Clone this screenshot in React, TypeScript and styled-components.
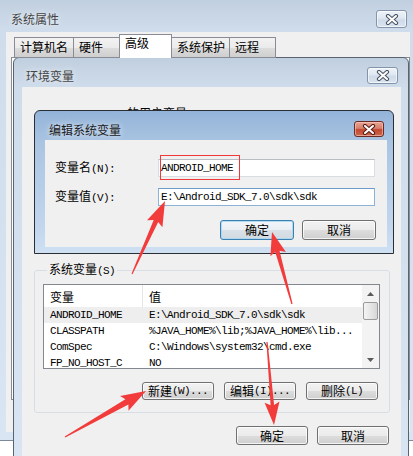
import React from "react";
import styled, { createGlobalStyle, css } from "styled-components";

const CJK = `"Noto Sans CJK SC", "Liberation Sans", sans-serif`;
const MONO = `"Liberation Mono", "Noto Sans CJK SC", monospace`;

const GlobalStyle = createGlobalStyle`
  html, body { margin: 0; padding: 0; background: #ffffff; }
  body { font-family: ${CJK}; font-size: 12px; color: #000; }
  * { box-sizing: border-box; }
`;

const Screen = styled.div`
  position: relative;
  width: 413px;
  height: 456px;
  overflow: hidden;
  background: #ffffff;
`;

const Mono = styled.span`
  font-family: ${MONO};
  font-size: 11px;
  letter-spacing: -0.6px;
`;

/* ---------- window chrome ---------- */

const Win = styled.div<{ $active?: boolean }>`
  position: absolute;
  display: flex;
  flex-direction: column;
  border: 1px solid ${(p) => (p.$active ? "#2a2f36" : "#5a6470")};
  border-radius: 6px 6px 0 0;
  background: ${(p) =>
    p.$active
      ? "linear-gradient(180deg, #93b3d8 0px, #a9c4e2 30px, #c3d7ee 120px, #cfe0f2 100%)"
      : "linear-gradient(180deg, #c0cfdf 0px, #cfdceb 30px, #d9e5f2 100%)"};
`;

const SysWin = styled(Win)`
  left: -1px;
  top: -1px;
  width: 420px;
  height: 442px;
  border-radius: 0;
  border-color: #7d8a99;
`;

const EnvWin = styled(Win)`
  left: 13px;
  top: 57px;
  width: 396px;
  height: 420px;
`;

const EditWin = styled(Win)`
  left: 34px;
  top: 110px;
  width: 360px;
  height: 144px;
`;

const TitleBar = styled.div<{ $h: number; $pl: number; $pr: number; $pt: number }>`
  height: ${(p) => p.$h}px;
  flex: none;
  display: flex;
  align-items: flex-start;
  justify-content: space-between;
  padding: ${(p) => `${p.$pt}px ${p.$pr}px 0 ${p.$pl}px`};
`;

const Title = styled.span<{ $active?: boolean }>`
  font-size: 12px;
  line-height: 16px;
  margin-top: 1px;
  color: ${(p) => (p.$active ? "#1b1b1b" : "#454545")};
  text-shadow: 0 0 6px rgba(255, 255, 255, 0.9);
`;

const CloseBtn = styled.div<{ $red?: boolean; $w: number; $h: number }>`
  width: ${(p) => p.$w}px;
  height: ${(p) => p.$h}px;
  border-radius: 3px;
  display: flex;
  align-items: center;
  justify-content: center;
  ${(p) =>
    p.$red
      ? css`
          border: 1px solid #6b2a22;
          background: linear-gradient(180deg, #e7a595 0%, #d67f6b 45%, #c2472f 55%, #cc6a4f 100%);
          box-shadow: inset 0 0 0 1px rgba(255, 210, 200, 0.55);
        `
      : css`
          border: 1px solid #8494aa;
          background: linear-gradient(180deg, #eef3f9 0%, #dfe8f2 45%, #cfdbe9 55%, #d9e4f0 100%);
          box-shadow: inset 0 0 0 1px rgba(255, 255, 255, 0.6);
        `}
`;

const XGlyph = ({ red }: { red?: boolean }) => (
  <svg width="14" height="11" viewBox="0 0 14 11">
    <path d="M3 2 L11 9 M11 2 L3 9" stroke={red ? "#5a1e16" : "#4b5563"} strokeWidth="4.2" strokeLinecap="round" />
    <path d="M3 2 L11 9 M11 2 L3 9" stroke="#ffffff" strokeWidth="2.1" strokeLinecap="round" />
  </svg>
);

/* ---------- 系统属性 body ---------- */

const SysBody = styled.div`
  flex: 1;
  margin: 0 8px 8px 6px;
  background: #f0f0f0;
  display: flex;
  flex-direction: column;
`;

const TabRow = styled.div`
  height: 26px;
  flex: none;
  display: flex;
  align-items: flex-end;
  padding-left: 8px;
`;

const Tab = styled.div<{ $w: number; $sel?: boolean }>`
  width: ${(p) => p.$w}px;
  height: ${(p) => (p.$sel ? 24 : 21)}px;
  border: 1px solid #898c95;
  border-bottom: ${(p) => (p.$sel ? "none" : "1px solid #898c95")};
  margin-right: -1px;
  background: ${(p) => (p.$sel ? "#ffffff" : "linear-gradient(180deg, #f2f2f2 0%, #ebebeb 50%, #dddddd 51%, #cfcfcf 100%)")};
  font-size: 12px;
  line-height: ${(p) => (p.$sel ? 16 : 18)}px;
  padding-left: 5px;
  position: relative;
  z-index: ${(p) => (p.$sel ? 2 : 1)};
`;

const TabPage = styled.div`
  margin: -1px 0 0 5px;
  height: 343px;
  background: #ffffff;
  border: 1px solid #898c95;
`;

/* ---------- 环境变量 content ---------- */

const EnvContent = styled.div`
  flex: 1;
  margin: 0 7px 0 8px;
  background: #f0f0f0;
  display: flex;
  flex-direction: column;
`;

const UserSection = styled.div`
  height: 175px;
  flex: none;
  padding: 19px 0 0 21px;
  line-height: 14px;
`;

const Group = styled.fieldset`
  margin: 0 11px 0 12px;
  padding: 6px 9px 12px 8px;
  border: 1px solid #d5dfe5;
  border-radius: 3px;
  min-width: 0;
`;

const Legend = styled.legend`
  padding: 0 2px;
  margin-left: 4px;
  font-size: 12px;
  line-height: 14px;
`;

const List = styled.div`
  height: 85px;
  border: 1px solid #828790;
  background: #ffffff;
  display: flex;
  overflow: hidden;
`;

const ListMain = styled.div`
  flex: 1;
  display: flex;
  flex-direction: column;
  min-width: 0;
`;

const ListRow = styled.div<{ $sel?: boolean }>`
  height: 16px;
  flex: none;
  display: grid;
  grid-template-columns: 99px 1fr;
  align-items: center;
  background: ${(p) => (p.$sel ? "#eeeeee" : "transparent")};
  white-space: nowrap;
`;

const HeaderRow = styled(ListRow)`
  height: 22px;
  background: #ffffff;
  align-items: stretch;
`;

const HeaderCell = styled.div<{ $sep?: boolean }>`
  display: flex;
  align-items: center;
  padding-left: 6px;
  font-size: 12px;
  border-right: ${(p) => (p.$sep ? "1px solid #e5e5e5" : "none")};
`;

const Cell = styled.div`
  padding-left: 6px;
  font-family: ${MONO};
  font-size: 11px;
  letter-spacing: -0.6px;
  line-height: 16px;
  overflow: hidden;
`;

const ScrollBar = styled.div`
  width: 17px;
  flex: none;
  display: flex;
  flex-direction: column;
  background: #f3f3f3;
`;

const ScrollArrow = styled.div`
  height: 17px;
  display: flex;
  align-items: center;
  justify-content: center;
`;

const Thumb = styled.div`
  height: 18px;
  margin: 0 1px;
  border: 1px solid #9b9b9b;
  border-radius: 2px;
  background: linear-gradient(90deg, #f4f4f4 0%, #e6e6e6 50%, #d6d6d6 100%);
`;

const ScrollSpacer = styled.div`
  flex: 1;
`;

const ButtonRow = styled.div<{ $mt: number; $pr: number; $gap: number }>`
  display: flex;
  justify-content: flex-end;
  gap: ${(p) => p.$gap}px;
  margin-top: ${(p) => p.$mt}px;
  padding-right: ${(p) => p.$pr}px;
`;

const Btn = styled.div<{ $def?: boolean; $w: number; $h: number }>`
  width: ${(p) => p.$w}px;
  height: ${(p) => p.$h}px;
  border: 1px solid ${(p) => (p.$def ? "#3c7fb1" : "#707070")};
  border-radius: 3px;
  background: ${(p) =>
    p.$def
      ? "linear-gradient(180deg, #f3f7fa 0%, #e9eef3 50%, #dae1e8 51%, #d2dae2 100%)"
      : "linear-gradient(180deg, #f2f2f2 0%, #ebebeb 50%, #dddddd 51%, #cfcfcf 100%)"};
  box-shadow: inset 0 0 0 1px ${(p) => (p.$def ? "rgba(170, 215, 240, 0.9)" : "rgba(255, 255, 255, 0.75)")};
  display: flex;
  align-items: center;
  justify-content: center;
  font-size: 12px;
  line-height: 14px;
  white-space: nowrap;
`;

/* ---------- 编辑系统变量 content ---------- */

const EditContent = styled.div`
  flex: 1;
  margin: 0 6px 6px 10px;
  background: #f0f0f0;
  padding: 18px 0 0 0;
  display: flex;
  flex-direction: column;
`;

const FormGrid = styled.div`
  display: grid;
  grid-template-columns: 103px 217px;
  row-gap: 9px;
  padding-left: 10px;
  align-items: center;
`;

const FieldLabel = styled.div`
  font-size: 12px;
  line-height: 18px;
  white-space: nowrap;
`;

const Field = styled.div<{ $focus?: boolean }>`
  height: 18px;
  background: #ffffff;
  border: 1px solid ${(p) => (p.$focus ? "#8db2d8" : "#d9dde3")};
  border-top-color: ${(p) => (p.$focus ? "#6f9bc8" : "#b9bdc4")};
  padding-left: 2px;
  display: flex;
  align-items: center;
  font-family: ${MONO};
  font-size: 11px;
  letter-spacing: -0.6px;
  white-space: nowrap;
`;

/* ---------- annotations ---------- */

const Overlay = styled.svg`
  position: absolute;
  left: 0;
  top: 0;
  pointer-events: none;
`;

const RedBox = styled.div`
  position: absolute;
  left: 160px;
  top: 155px;
  width: 80px;
  height: 25px;
  border: 1px solid #f0393b;
  pointer-events: none;
`;

function arrow(x1: number, y1: number, x2: number, y2: number, headL = 22, headW = 17, neckW = 5, tailW = 1.2) {
  const dx = x2 - x1;
  const dy = y2 - y1;
  const L = Math.hypot(dx, dy);
  const ux = dx / L;
  const uy = dy / L;
  const px = -uy;
  const py = ux;
  const bx = x2 - ux * headL;
  const by = y2 - uy * headL;
  const bbx = bx - ux * 3;
  const bby = by - uy * 3;
  const pts = [
    [x1 + (px * tailW) / 2, y1 + (py * tailW) / 2],
    [bx + (px * neckW) / 2, by + (py * neckW) / 2],
    [bbx + (px * headW) / 2, bby + (py * headW) / 2],
    [x2, y2],
    [bbx - (px * headW) / 2, bby - (py * headW) / 2],
    [bx - (px * neckW) / 2, by - (py * neckW) / 2],
    [x1 - (px * tailW) / 2, y1 - (py * tailW) / 2],
  ];
  return pts.map((p) => `${p[0].toFixed(1)},${p[1].toFixed(1)}`).join(" ");
}

const ScrollTri = ({ up }: { up?: boolean }) => (
  <svg width="7" height="4" viewBox="0 0 7 4">
    <polygon points={up ? "0,4 7,4 3.5,0" : "0,0 7,0 3.5,4"} fill="#5a5a5a" />
  </svg>
);

const rows = [
  { name: "ANDROID_HOME", value: "E:\\Android_SDK_7.0\\sdk\\sdk", sel: true },
  { name: "CLASSPATH", value: "%JAVA_HOME%\\lib;%JAVA_HOME%\\lib..." },
  { name: "ComSpec", value: "C:\\Windows\\system32\\cmd.exe" },
  { name: "FP_NO_HOST_C", value: "NO" },
];

const tabs = [
  { label: "计算机名", w: 60 },
  { label: "硬件", w: 47 },
  { label: "高级", w: 53, sel: true },
  { label: "系统保护", w: 59 },
  { label: "远程", w: 47 },
];

export default function App() {
  return (
    <Screen>
      <GlobalStyle />

      <SysWin>
        <TitleBar $h={32} $pl={11} $pr={11} $pt={10}>
          <Title>系统属性</Title>
          <CloseBtn $w={31} $h={18}>
            <XGlyph />
          </CloseBtn>
        </TitleBar>
        <SysBody>
          <TabRow>
            {tabs.map((t) => (
              <Tab key={t.label} $w={t.w} $sel={t.sel}>
                {t.label}
              </Tab>
            ))}
          </TabRow>
          <TabPage />
        </SysBody>
      </SysWin>

      <EnvWin>
        <TitleBar $h={29} $pl={12} $pr={10} $pt={9}>
          <Title>环境变量</Title>
          <CloseBtn $w={31} $h={17}>
            <XGlyph />
          </CloseBtn>
        </TitleBar>
        <EnvContent>
          <UserSection>
            <Mono>Administrator </Mono>的用户变量<Mono>(U)</Mono>
          </UserSection>
          <Group>
            <Legend>
              系统变量<Mono>(S)</Mono>
            </Legend>
            <List>
              <ListMain>
                <HeaderRow>
                  <HeaderCell $sep>变量</HeaderCell>
                  <HeaderCell>值</HeaderCell>
                </HeaderRow>
                {rows.map((r) => (
                  <ListRow key={r.name} $sel={r.sel}>
                    <Cell>{r.name}</Cell>
                    <Cell>{r.value}</Cell>
                  </ListRow>
                ))}
              </ListMain>
              <ScrollBar>
                <ScrollArrow>
                  <ScrollTri up />
                </ScrollArrow>
                <Thumb />
                <ScrollSpacer />
                <ScrollArrow>
                  <ScrollTri />
                </ScrollArrow>
              </ScrollBar>
            </List>
            <ButtonRow $mt={13} $pr={2} $gap={10}>
              <Btn $w={72} $h={18}>
                新建<Mono>(W)...</Mono>
              </Btn>
              <Btn $w={72} $h={18}>
                编辑<Mono>(I)...</Mono>
              </Btn>
              <Btn $w={72} $h={18}>
                删除<Mono>(L)</Mono>
              </Btn>
            </ButtonRow>
          </Group>
          <ButtonRow $mt={13} $pr={12} $gap={9}>
            <Btn $w={72} $h={19}>
              确定
            </Btn>
            <Btn $w={72} $h={19}>
              取消
            </Btn>
          </ButtonRow>
        </EnvContent>
      </EnvWin>

      <EditWin $active>
        <TitleBar $h={29} $pl={14} $pr={9} $pt={10}>
          <Title $active>编辑系统变量</Title>
          <CloseBtn $red $w={30} $h={16}>
            <XGlyph red />
          </CloseBtn>
        </TitleBar>
        <EditContent>
          <FormGrid>
            <FieldLabel>
              变量名<Mono>(N):</Mono>
            </FieldLabel>
            <Field>ANDROID_HOME</Field>
            <FieldLabel>
              变量值<Mono>(V):</Mono>
            </FieldLabel>
            <Field $focus>E:\Android_SDK_7.0\sdk\sdk</Field>
          </FormGrid>
          <ButtonRow $mt={13} $pr={11} $gap={8}>
            <Btn $def $w={74} $h={20}>
              确定
            </Btn>
            <Btn $w={74} $h={20}>
              取消
            </Btn>
          </ButtonRow>
        </EditContent>
      </EditWin>

      <RedBox />

      <Overlay width="413" height="456" viewBox="0 0 413 456">
        <polygon points={arrow(132, 274, 165, 201)} fill="#f23b3b" />
        <polygon points={arrow(292, 304, 272, 232, 20, 16, 4.5)} fill="#f23b3b" />
        <polygon points={arrow(65, 437, 146, 391, 22, 17, 6)} fill="#f23b3b" />
        <polygon points={arrow(267, 342, 274, 425, 20, 15, 3.5)} fill="#f23b3b" />
      </Overlay>
    </Screen>
  );
}
